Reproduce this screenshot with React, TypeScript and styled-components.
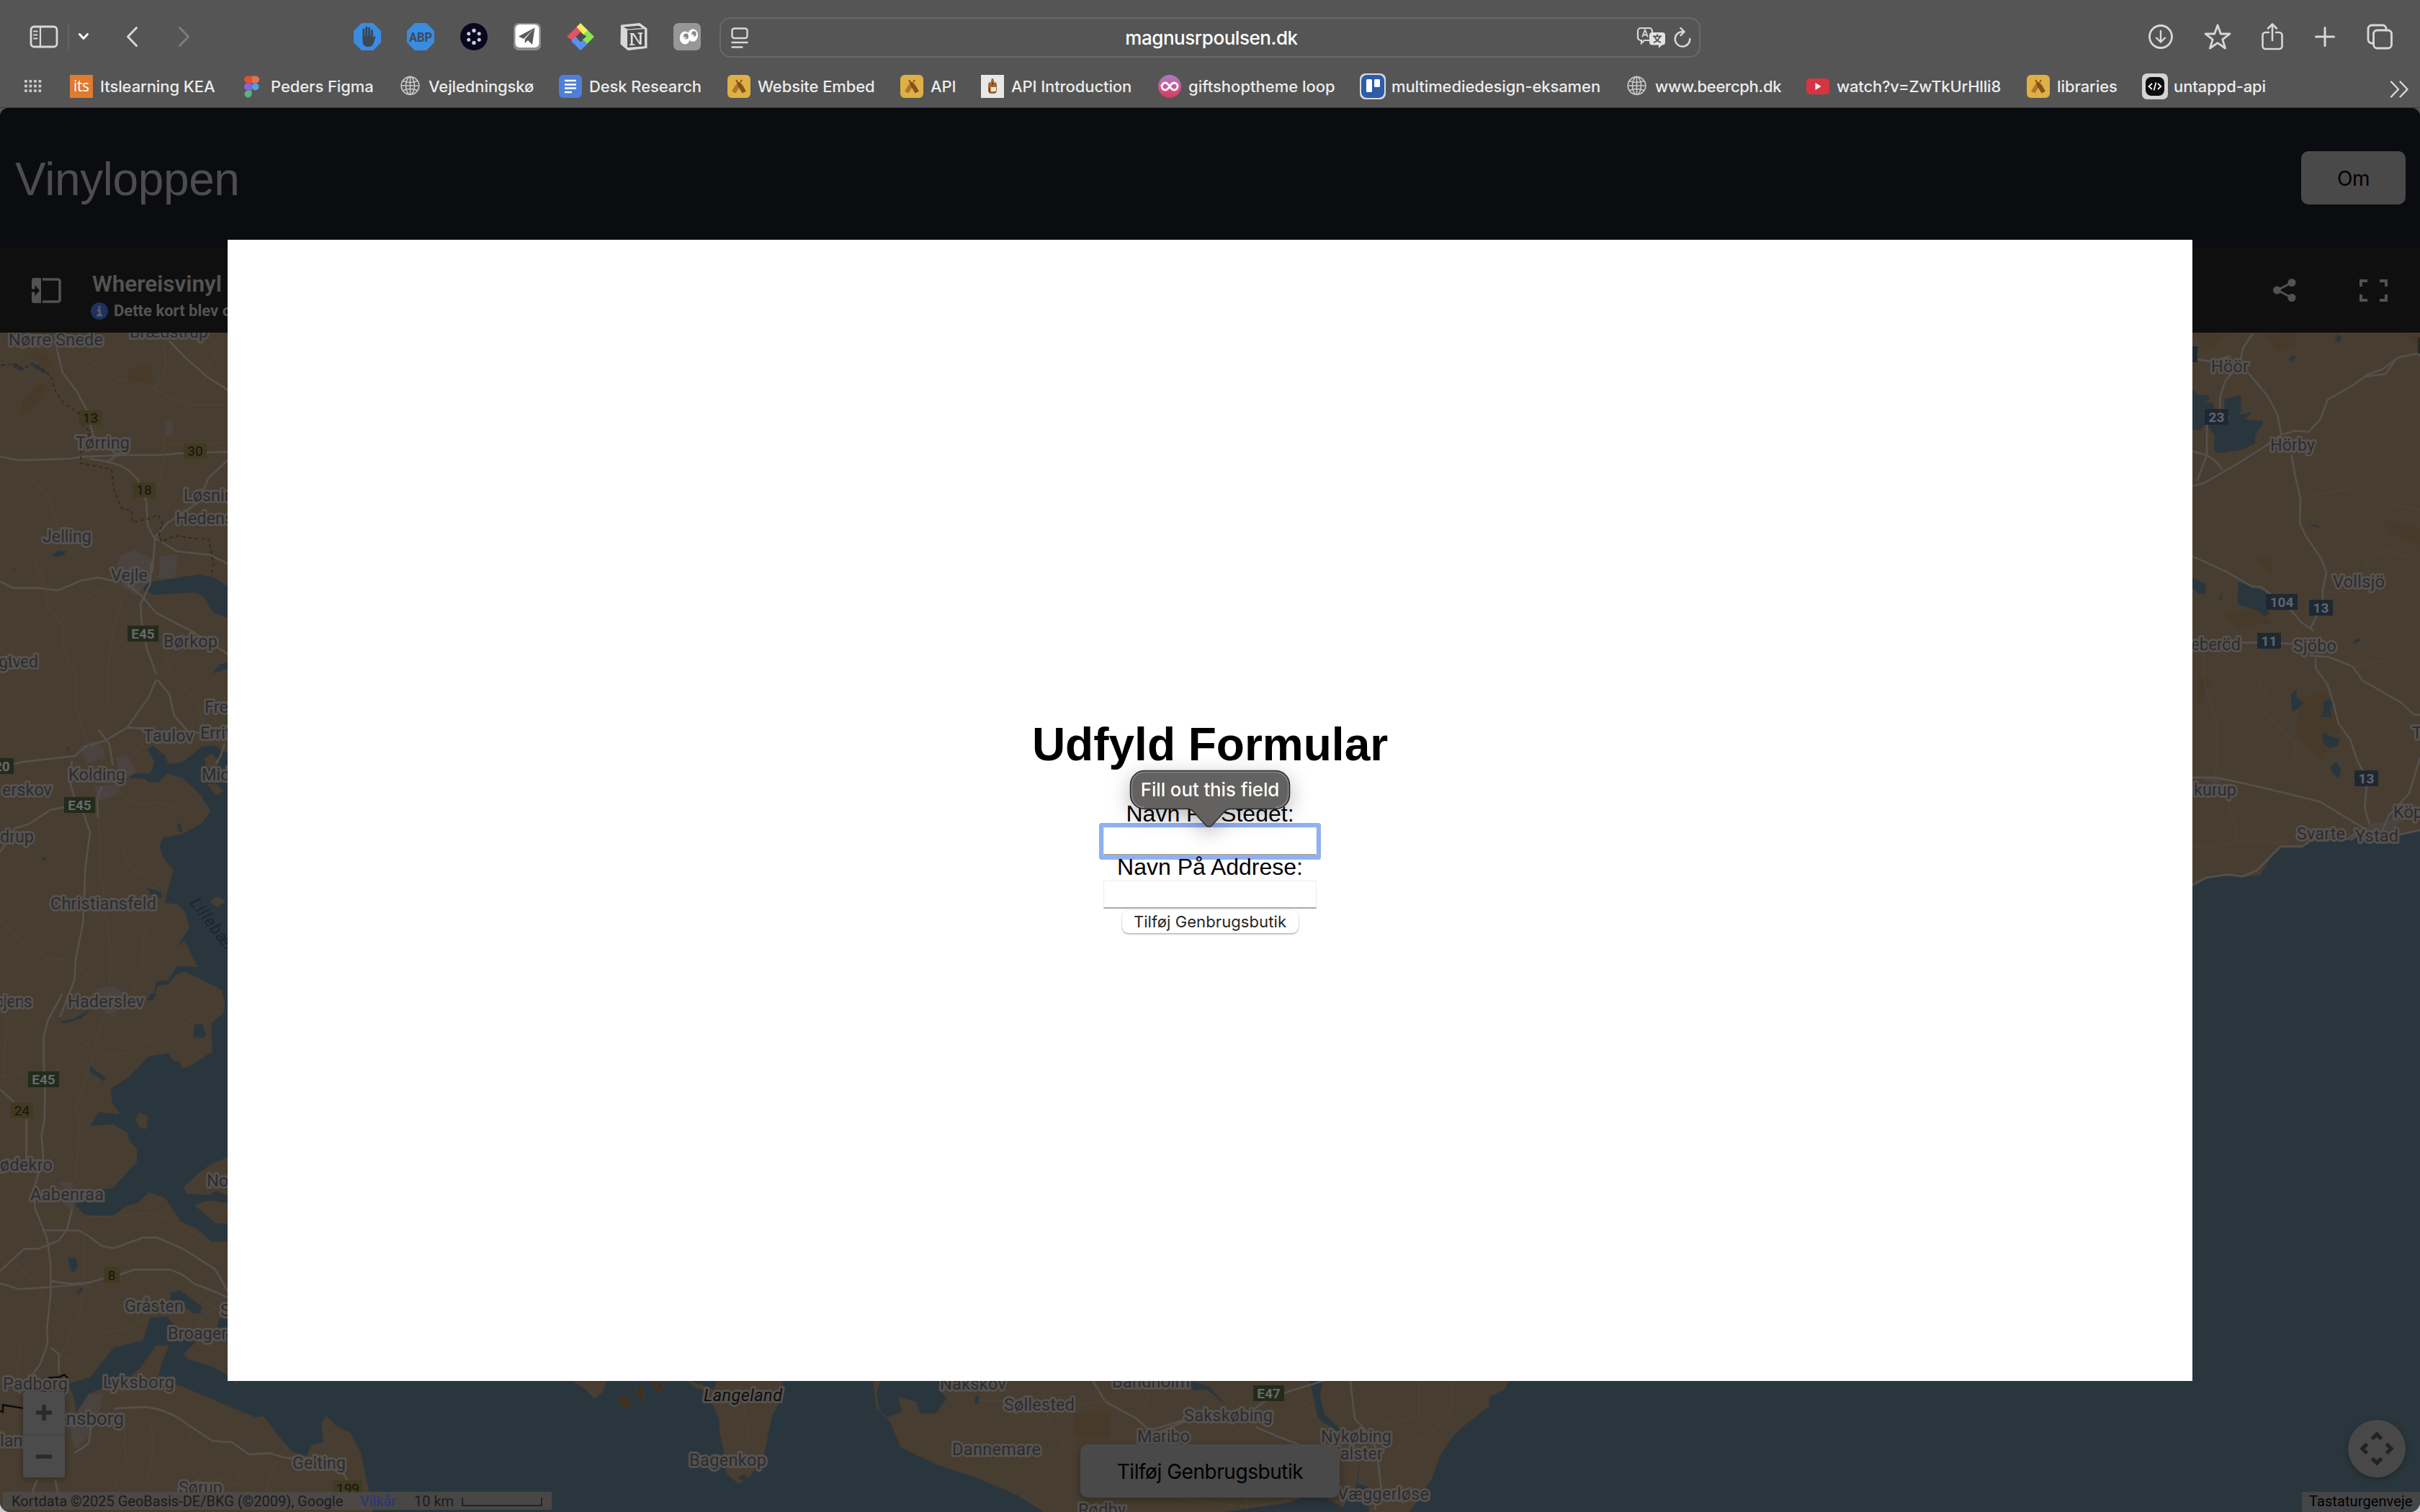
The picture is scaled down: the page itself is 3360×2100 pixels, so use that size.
import React from "react";
import styled, { createGlobalStyle } from "styled-components";

const ui = `Inter, "Liberation Sans", sans-serif`;
const arial = `"Liberation Sans", Arial, sans-serif`;
const roboto = `Roboto, "Liberation Sans", sans-serif`;

const Global = createGlobalStyle`
  * { box-sizing: border-box; }
  body { margin: 0; background: #c9ccd0; overflow: hidden; }
`;

/* ---------- window ---------- */
const Window = styled.div`
  width: 3360px;
  height: 2100px;
  display: flex;
  flex-direction: column;
  overflow: hidden;
  background: #555555;
  border-radius: 0 0 14px 14px;
`;
const Chrome = styled.header`
  flex: 0 0 150px;
  display: flex;
  flex-direction: column;
  background: #555555;
  border-bottom: 1px solid #3a3a3a;
  color: #ececec;
  font-family: ${ui};
`;
const Toolbar = styled.div`
  height: 80px;
  padding-top: 24px;
  display: flex;
`;
const Slot = styled.div<{ $w: number; $gap: number }>`
  flex: 0 0 ${(p) => p.$w}px;
  height: 54px;
  margin-left: ${(p) => p.$gap}px;
  display: flex;
  align-items: center;
  justify-content: center;
  svg { display: block; overflow: visible; }
`;
const Divider = styled.div`
  width: 2px;
  height: 36px;
  background: #636363;
`;
const AddressBar = styled.div`
  flex: 0 0 1362px;
  height: 56px;
  margin-left: 26px;
  padding: 0 11px 0 14px;
  display: flex;
  align-items: center;
  border: 2px solid #696969;
  border-radius: 15px;
  svg { display: block; overflow: visible; }
`;
const Address = styled.div`
  flex: 1;
  padding-left: 52px;
  text-align: center;
  font-size: 26px;
  font-weight: 500;
  letter-spacing: -0.45px;
  color: #fff;
`;
const AddressTools = styled.div`
  display: flex;
  align-items: center;
  gap: 12px;
`;
const Bookmarks = styled.nav`
  height: 69px;
  padding-top: 10px;
  padding-left: 34px;
  display: flex;
  align-items: center;
`;
const GridSlot = styled.div`
  width: 63px;
  svg { display: block; }
`;
const Bookmark = styled.div<{ $w: number }>`
  flex: 0 0 ${(p) => p.$w}px;
  display: flex;
  align-items: center;
  gap: 10px;
  white-space: nowrap;
  svg { display: block; flex: 0 0 32px; overflow: visible; }
`;
const BookmarkLabel = styled.span<{ $ls: number }>`
  font-size: 22px;
  line-height: 32px;
  font-weight: 500;
  letter-spacing: ${(p) => p.$ls}px;
`;
const More = styled.div`
  margin-left: auto;
  padding: 8px 15px 0 0;
  svg { display: block; }
`;

/* ---------- page ---------- */
const Page = styled.div`
  position: relative;
  flex: 1;
  display: flex;
  flex-direction: column;
  overflow: hidden;
  border-radius: 12px 12px 14px 14px;
  background: #0a0c10;
`;
const SiteHeader = styled.div`
  flex: 0 0 194px;
  padding: 0 20px;
  display: flex;
  align-items: center;
  justify-content: space-between;
  background: #0a0c10;
`;
const SiteTitle = styled.h1`
  margin: 0;
  padding: 3px 0 0 1px;
  font: 400 64px/74px ${arial};
  letter-spacing: -0.4px;
  color: #4d4d4f;
`;
const Button = styled.button<{ $w: number }>`
  width: ${(p) => p.$w}px;
  height: 74px;
  padding: 2px 0 0;
  border: 0;
  border-radius: 10px;
  background: #494949;
  color: #000;
  font: 400 28px/34px ${ui};
  letter-spacing: -0.45px;
`;
const MapBar = styled.div`
  flex: 0 0 118px;
  padding: 0 45px 0 44px;
  display: flex;
  align-items: center;
  background: #0f0f0f;
  color: #545454;
  font-family: ${roboto};
  svg { display: block; }
`;
const MapTitle = styled.div`
  margin-left: 41px;
  padding-top: 15px;
  flex: 1;
  display: flex;
  flex-direction: column;
  gap: 6px;
`;
const MapName = styled.div`
  padding-left: 2px;
  font-size: 31.5px;
  line-height: 36px;
  font-weight: 600;
`;
const MapNote = styled.div`
  display: flex;
  align-items: center;
  gap: 8px;
  font-size: 22px;
  line-height: 26px;
  font-weight: 700;
`;
const BarIcons = styled.div`
  display: flex;
  align-items: center;
  gap: 88px;
`;
const MapArea = styled.div`
  position: relative;
  flex: 1;
  background: #2a363d;
`;
const MapSvg = styled.svg`
  display: block;
  width: 3360px;
  height: 1638px;
`;
const Land = styled.path`fill: #473d30;`;
const Water = styled.path`fill: #2a363d;`;
const Urban = styled.path`fill: #4a4340;`;
const Hill = styled.path`fill: #483a2a;`;
const Road = styled.path<{ $minor?: boolean }>`
  fill: none;
  stroke: ${(p) => (p.$minor ? "#4e4337" : "#55504b")};
  stroke-width: ${(p) => (p.$minor ? 1.4 : 2.8)};
  vector-effect: non-scaling-stroke;
  stroke-linejoin: round;
`;
const Border = styled.path`
  fill: none;
  stroke: #2e2923;
  stroke-width: 1.6;
  stroke-dasharray: 5 4;
  vector-effect: non-scaling-stroke;
`;
const Frontier = styled.path`
  fill: none;
  stroke: #0c0b0a;
  stroke-width: 2.4;
  vector-effect: non-scaling-stroke;
`;
const Place = styled.text<{ $big?: boolean }>`
  font: 400 ${(p) => (p.$big ? 26 : 23.5)}px ${roboto};
  fill: #2c2c2f;
  stroke: #55514e;
  stroke-width: 6px;
  stroke-linejoin: round;
  paint-order: stroke;
`;
const Island = styled(Place)`
  font-style: italic;
  fill: #0e0e0f;
`;
const Strait = styled.text`
  font: italic 400 23px ${roboto};
  letter-spacing: 1px;
  fill: #18262d;
`;
const Region = styled.text`
  font: 700 24px ${roboto};
  fill: #4f2d0d;
`;
const ShieldText = styled.text<{ $fill: string; $bold?: boolean }>`
  font: ${(p) => (p.$bold ? 700 : 400)} 19px ${roboto};
  fill: ${(p) => p.$fill};
`;

/* ---------- map controls ---------- */
const ZoomControl = styled.div`
  position: absolute;
  left: 32px;
  top: 1471px;
  width: 58px;
  height: 119px;
  display: flex;
  flex-direction: column;
  border-radius: 4px;
  background: #4b4b4b;
  box-shadow: 0 2px 8px rgba(0, 0, 0, 0.3);
`;
const ZoomButton = styled.div`
  flex: 1;
  display: flex;
  align-items: center;
  justify-content: center;
  & + & { border-top: 2px solid #444; }
`;
const PanControl = styled.div`
  position: absolute;
  right: 20px;
  top: 1510px;
  width: 80px;
  height: 80px;
  border-radius: 50%;
  background: #484848;
  box-shadow: 0 2px 8px rgba(0, 0, 0, 0.3);
`;
const AddButton = styled(Button)`
  position: absolute;
  left: 1500px;
  top: 1544px;
  box-shadow: 0 4px 12px rgba(0, 0, 0, 0.3);
`;
const Attribution = styled.div`
  position: absolute;
  left: 4px;
  bottom: 3px;
  width: 762px;
  height: 25px;
  padding: 2px 0 0 12px;
  display: flex;
  align-items: center;
  background: rgba(76, 74, 72, 0.88);
  color: #1c1c1c;
  font: 400 20px/25px ${roboto};
  white-space: nowrap;
`;
const Credit = styled.span`
  width: 484px;
`;
const Terms = styled.span`
  width: 75px;
  color: #25367c;
`;
const ScaleLabel = styled.span`width: 66px;`;
const ScaleBar = styled.span`
  width: 112px;
  height: 12px;
  border: 2px solid #222;
  border-top: 0;
`;
const Shortcuts = styled.div`
  position: absolute;
  right: 0;
  bottom: 0;
  width: 164px;
  height: 28px;
  padding-left: 10px;
  background: #434547;
  color: #000;
  font: 400 20px/27px ${roboto};
  letter-spacing: 0.1px;
`;

/* ---------- dialog ---------- */
const Overlay = styled.div`
  position: absolute;
  inset: 0;
  display: flex;
  align-items: center;
  justify-content: center;
`;
const Dialog = styled.form`
  width: 2728px;
  height: 1585px;
  display: flex;
  flex-direction: column;
  align-items: center;
  justify-content: center;
  background: #fff;
  color: #000;
`;
const DialogTitle = styled.h2`
  margin: 43px 0;
  font: 700 64px/74px ${arial};
`;
const FieldLabel = styled.label`
  position: relative;
  z-index: 1;
  height: 35px;
  font: 400 32px/32px ${arial};
`;
const Field = styled.div<{ $focused?: boolean }>`
  position: relative;
  z-index: ${(p) => (p.$focused ? 1 : 0)};
  width: 296px;
  height: 39px;
  background: #fff;
  border: 1px solid #ededed;
  border-bottom: 2px solid #a9a9a9;
  box-shadow: ${(p) => (p.$focused ? "0 0 0 6px #8fb1f3" : "none")};
  border-radius: ${(p) => (p.$focused ? 1 : 0)}px;
`;
const Submit = styled.button`
  width: 245px;
  height: 32px;
  margin-top: 2px;
  padding: 0 0 1px;
  border: 0;
  border-radius: 9px;
  background: #fff;
  box-shadow: 0 0 0 1px rgba(0, 0, 0, 0.08), 0 2px 2px rgba(0, 0, 0, 0.22);
  color: #262626;
  font: 400 22px/30px ${ui};
  letter-spacing: 0.1px;
`;
const Tooltip = styled.div`
  position: absolute;
  z-index: 2;
  left: 36px;
  top: -80px;
  width: 222px;
  height: 80px;
  filter: drop-shadow(0 8px 14px rgba(0, 0, 0, 0.28));
  svg { display: block; overflow: visible; }
`;
const TooltipText = styled.div`
  position: absolute;
  inset: 0 0 26px 0;
  font: 500 26px/54px ${ui};
  letter-spacing: -0.15px;
  text-align: center;
  color: #fff;
  white-space: nowrap;
`;

/* ---------- data ---------- */
type Mark = { label: string; w: number; icon: string; ls?: number };
const bookmarks: Mark[] = [
  { label: "Itslearning KEA", w: 237, icon: "its" },
  { label: "Peders Figma", w: 219, icon: "figma" },
  { label: "Vejledningskø", w: 223, icon: "globe" },
  { label: "Desk Research", w: 234, icon: "docs" },
  { label: "Website Embed", w: 240, icon: "beer" },
  { label: "API", w: 112, icon: "beer" },
  { label: "API Introduction", w: 246, icon: "print" },
  { label: "giftshoptheme loop", w: 282, icon: "loop", ls: 0 },
  { label: "multimediedesign-eksamen", w: 366, icon: "trello" },
  { label: "www.beercph.dk", w: 252, icon: "globe", ls: -0.3 },
  { label: "watch?v=ZwTkUrHlli8", w: 306, icon: "tube", ls: -0.2 },
  { label: "libraries", w: 162, icon: "beer" },
  { label: "untappd-api", w: 180, icon: "code" },
];

type Label = [string, number, number, number?];
const places: Label[] = [
  ["Nørre Snede", 12, 480, 131], ["Brædstrup", 180, 469, 109], ["Tørring", 105, 623, 75],
  ["Løsning", 255, 696], ["Hedensted", 244, 728], ["Jelling", 59, 753, 68],
  ["Vejle", 154, 807, 51], ["Børkop", 227, 899, 75], ["gtved", -2, 927, 55],
  ["Fredericia", 284, 990], ["Taulov", 199, 1030, 70], ["Erritsø", 278, 1026],
  ["Middelfart", 280, 1084], ["Kolding", 95, 1084, 79], ["erskov", 3, 1105, 69],
  ["drup", 0, 1170, 47], ["Christiansfeld", 70, 1263, 147], ["ojens", -8, 1399, 53],
  ["Haderslev", 94, 1399, 106], ["ødekro", 0, 1626, 73], ["Aabenraa", 42, 1667, 102],
  ["Nordborg", 287, 1648], ["Gråsten", 173, 1822, 82], ["Sønderborg", 306, 1828],
  ["Broager", 233, 1860], ["Padborg", 4, 1930, 90], ["Lyksborg", 143, 1928, 99],
  ["lanved", 0, 2009], ["Sørup", 248, 2074, 61], ["Gelting", 406, 2040, 74],
  ["Bagenkop", 957, 2036, 107], ["Nakskov", 1305, 1930, 92], ["Bandholm", 1544, 1927, 108],
  ["Søllested", 1394, 1959, 98], ["Sakskøbing", 1644, 1974, 123], ["Maribo", 1579, 2003, 73],
  ["Nykøbing", 1834, 2003, 98], ["Falster", 1848, 2027, 72], ["Dannemare", 1322, 2021, 123],
  ["Væggerløse", 1857, 2083, 127], ["Rødby", 1497, 2105, 66], ["Höör", 3070, 517, 52],
  ["Hörby", 3152, 626, 62], ["Vollsjö", 3239, 816, 72], ["Sjöbo", 3184, 905, 60],
  ["eberöd", 3042, 903, 69], ["kurup", 3046, 1105, 59], ["Svarte", 3189, 1166, 67],
  ["Ystad", 3270, 1169, 60], ["Köpingebro", 3323, 1136], ["Tomelilla", 3349, 1026],
];

type Shield = [string, number, number, number, number, "y" | "g" | "b"];
const shields: Shield[] = [
  ["13", 110, 570, 31, 20, "y"], ["30", 255, 616, 32, 21, "y"], ["18", 184, 670, 32, 21, "y"],
  ["24", 15, 1531, 31, 22, "y"], ["8", 144, 1760, 22, 22, "y"], ["199", 463, 2056, 40, 22, "y"],
  ["E45", 177, 869, 43, 22, "g"], ["E20", -24, 1053, 43, 22, "g"], ["E45", 89, 1107, 43, 22, "g"],
  ["E45", 39, 1488, 43, 22, "g"], ["E47", 1740, 1924, 43, 22, "g"], ["", 3357, 469, 20, 22, "g"],
  ["", 3030, 481, 21, 22, "b"], ["23", 3061, 568, 33, 22, "b"], ["104", 3146, 825, 44, 22, "b"],
  ["13", 3206, 833, 33, 22, "b"], ["11", 3134, 879, 33, 22, "b"], ["13", 3269, 1070, 33, 22, "b"],
];
const shieldColors = {
  y: ["#403a20", "#151412"],
  g: ["#222b1c", "#69696a"],
  b: ["#1e2833", "#5f666e"],
};

/* ---------- bookmark icons ---------- */
function BookmarkIcon({ kind }: { kind: string }) {
  const s = { width: 32, height: 32, viewBox: "0 0 32 32" };
  switch (kind) {
    case "its":
      return (
        <svg {...s}><rect width="32" height="32" fill="#e07b2f" />
          <text x="16" y="23" textAnchor="middle" fontFamily="Open Sans" fontSize="21" fill="#fff" textLength="22">its</text></svg>
      );
    case "figma":
      return (
        <svg {...s}><g transform="translate(5 1.5)">
          <path d="M5 0h5.500v10H5A5 5 0 0 1 5 0z" fill="#d9532c" /><path d="M10.500 0H16a5 5 0 0 1 0 10h-5.500z" fill="#e0705c" />
          <path d="M5 10h5.500v10H5a5 5 0 0 1 0-10z" fill="#8f5fe0" /><circle cx="15.500" cy="15" r="5" fill="#4da3e0" />
          <path d="M5 20h5.500v5A5 5 0 1 1 5 20z" fill="#52b77c" /></g></svg>
      );
    case "globe":
      return (
        <svg {...s}><g fill="none" stroke="#c8c8c8" strokeWidth="1.7"><circle cx="16.500" cy="15" r="12.300" />
          <ellipse cx="16.500" cy="15" rx="6" ry="12.300" /><path d="M16.500 2.700v24.600M4.200 15h24.600M6.500 8.500q10 4 20 0M6.500 21.500q10-4 20 0" /></g></svg>
      );
    case "docs":
      return (
        <svg {...s}><rect width="32" height="32" rx="6" fill="#4f7fd9" />
          <path d="M8 8h16M8 13.500h16M8 18.500h16M8 24h10" stroke="#fff" strokeWidth="2.600" /></svg>
      );
    case "beer":
      return (
        <svg {...s}><rect width="32" height="32" rx="6" fill="#deb045" />
          <path d="M18.500 8.500l1.200.6-2.700 7.200L11.300 25.500 6 22.800l5.600-9.200z" fill="#b5732a" />
          <path d="M12.300 9.100l1.200-.6 7 5.100 5.500 9.200-5.300 2.700-5.700-9.200z" fill="#7d4a1c" opacity=".92" />
          <path d="M13.200 9l-1-2M18.800 9l1-2" stroke="#7d4a1c" strokeWidth="1.800" /></svg>
      );
    case "print":
      return (
        <svg {...s}><rect width="32" height="32" fill="#e8e8e6" />
          <path d="M10 13l2-4 1 3 2-7h2l2 7 1-3 2 4v10l-3 3h-6l-3-3z" fill="#a8642e" /><path d="M12 18v7M20 18v7M16 10v4" stroke="#5b3213" strokeWidth="1.400" /><rect x="13.500" y="17" width="7.500" height="6" fill="#efe6da" /></svg>
      );
    case "loop":
      return (
        <svg {...s}><defs><linearGradient id="lg" x1="0" y1="0" x2="0" y2="1"><stop offset="0" stopColor="#a37cc4" /><stop offset=".55" stopColor="#cf5590" /><stop offset="1" stopColor="#d63b52" /></linearGradient></defs>
          <circle cx="16" cy="16" r="16" fill="url(#lg)" />
          <path d="M16 16c-3-4.500-4-5-6-5a5 5 0 0 0 0 10c2 0 3-.5 6-5s4-5 6-5a5 5 0 0 1 0 10c-2 0-3-.5-6-5z" fill="none" stroke="#fff" strokeWidth="2.800" /></svg>
      );
    case "trello":
      return (
        <svg {...s}><rect x="-2" y="-2" width="36" height="36" rx="8" fill="#d9dcdc" /><rect width="32" height="32" rx="8" fill="#2c5caa" />
          <rect x="7" y="6" width="8" height="18" rx="1.500" fill="#fff" /><rect x="18" y="6" width="8" height="11" rx="1.500" fill="#fff" /></svg>
      );
    case "tube":
      return (
        <svg {...s}><rect y="5" width="32" height="22" rx="5" fill="#d8343f" /><path d="M12.500 11v10l8-5z" fill="#fff" /></svg>
      );
    default:
      return (
        <svg {...s}><rect x="-2" y="-2" width="36" height="36" rx="7" fill="#d4d4d4" /><rect x="3" y="3" width="26" height="26" rx="8" fill="#0d0d0d" />
          <path d="M12 12l-4.500 4 4.500 4M20 12l4.500 4-4.500 4M17.500 10.500l-3 11" fill="none" stroke="#fff" strokeWidth="1.700" /></svg>
      );
  }
}

const line = { fill: "none", stroke: "#d8d8d8", strokeWidth: 2.8, strokeLinecap: "round" as const, strokeLinejoin: "round" as const };

function BrowserChrome() {
  return (
    <Chrome>
      <Toolbar>
        <Slot $w={40} $gap={41}>
          <svg width="40" height="32" viewBox="0 0 40 32" {...line}><rect x="2" y="2" width="36" height="28" rx="4.500" /><path d="M15 2v28M6 8.500h4.500M6 13.500h4.500M6 18.500h4.500" strokeWidth="2.200" /></svg>
        </Slot>
        <Slot $w={2} $gap={13}><Divider /></Slot>
        <Slot $w={16} $gap={12}>
          <svg width="16" height="10" viewBox="0 0 16 10" {...line} stroke="#fff" strokeWidth="3"><path d="M2.500 1.500L8 7.500l5.500-6" /></svg>
        </Slot>
        <Slot $w={17} $gap={51}>
          <svg width="17" height="30" viewBox="0 0 17 30" {...line} strokeWidth="3"><path d="M14.500 2.500L2.500 15l12 12.500" /></svg>
        </Slot>
        <Slot $w={17} $gap={55}>
          <svg width="17" height="30" viewBox="0 0 17 30" {...line} stroke="#7d7d7d" strokeWidth="3"><path d="M2.500 2.500L14.500 15l-12 12.500" /></svg>
        </Slot>
        <Slot $w={38} $gap={227}>
          <svg width="38" height="38" viewBox="0 0 38 38"><path d="M11 0h16l11 11v16L27 38H11L0 27V11z" fill="#3a8ce0" />
            <path d="M14 9v12M17.800 6v14M21.600 7v13M25.400 10.500v11" stroke="#3b4855" strokeWidth="3" strokeLinecap="round" /><path d="M12.500 18h14.400v3l2-3 1.600 1-3 9.500q-2 4.500-7 4.500-8 0-8-8z" fill="#3b4855" /></svg>
        </Slot>
        <Slot $w={38} $gap={36}>
          <svg width="38" height="38" viewBox="0 0 38 38"><path d="M11 0h16l11 11v16L27 38H11L0 27V11z" fill="#3a8ce0" />
            <text x="19" y="25.500" textAnchor="middle" fontFamily="Roboto" fontWeight="700" fontSize="18" textLength="32" lengthAdjust="spacingAndGlyphs" fill="#3c4a5a">ABP</text></svg>
        </Slot>
        <Slot $w={38} $gap={36}>
          <svg width="38" height="38" viewBox="0 0 38 38"><circle cx="19" cy="19" r="19" fill="#08071f" />
            <g fill="#cfcfcf"><circle cx="19" cy="10.500" r="2.700" /><circle cx="19" cy="27.500" r="2.700" /><circle cx="11.800" cy="14.700" r="2.500" /><circle cx="26.200" cy="14.700" r="2.500" /><circle cx="11.800" cy="23.300" r="2.500" /><circle cx="26.200" cy="23.300" r="2.500" /></g></svg>
        </Slot>
        <Slot $w={38} $gap={36}>
          <svg width="38" height="38" viewBox="0 0 38 38"><rect width="38" height="38" rx="7" fill="#8b8b8b" /><rect x="2.500" y="2" width="33" height="32" rx="6" fill="#fff" />
            <path d="M29.500 6.500L7 18.500l7 3.500zM29.500 6.500L26 30l-6-6-4.500 4 .5-6z" fill="#595959" /></svg>
        </Slot>
        <Slot $w={38} $gap={36}>
          <svg width="38" height="38" viewBox="0 0 38 38"><path d="M14.500 4.500L23.500 13.500 11 26 0 19z" fill="#ea4f63" /><path d="M19 0l10.500 10.500-6 6L13.500 5.500z" fill="#f7ee5c" />
            <path d="M29 10l9 9-10.500 10.500-6-6 6-5-4.500-3z" fill="#86e64f" /><path d="M19 38L6 25l5.500-6 8 7.500 3.500-3 5.500 5.500z" fill="#5a8ff5" /><path d="M19 12.500l6.500 6.500-6.500 6.500-6.500-6.500z" fill="#4c4c4c" /></svg>
        </Slot>
        <Slot $w={38} $gap={36}>
          <svg width="38" height="38" viewBox="0 0 38 38"><path d="M2 3.500L27 1l9.500 7v26L11 37 1.500 29z" fill="#d8d8d8" stroke="#d8d8d8" strokeWidth="2" strokeLinejoin="round" />
            <path d="M10 9.800l24-1.600v24L10 34z" fill="#4d4d4d" /><path d="M4.500 5.500L26 3.800l5 3.200-20.500 1.600z" fill="#4d4d4d" />
            <path d="M13 14h6l8 12.500V15.200l-2.500-.5v-1.500h7v1.500l-1.800.5V30H27L17.500 16v13l3 .5v1.500H13v-1.500l1.800-.5V16z" fill="#dedede" /></svg>
        </Slot>
        <Slot $w={38} $gap={36}>
          <svg width="38" height="38" viewBox="0 0 38 38"><rect width="38" height="38" rx="7" fill="#979797" />
            <ellipse cx="16" cy="20.500" rx="7.300" ry="9" fill="#fff" /><ellipse cx="27" cy="17" rx="7" ry="8.700" fill="#fff" /><ellipse cx="17.500" cy="18.500" rx="3.400" ry="4" fill="#868686" /><ellipse cx="28.500" cy="15" rx="3.200" ry="3.800" fill="#868686" /><circle cx="16.300" cy="20.500" r="1.300" fill="#fff" /><circle cx="27.200" cy="17" r="1.300" fill="#fff" /></svg>
        </Slot>
        <AddressBar>
          <svg width="24" height="29" viewBox="0 0 24 29" {...line} strokeWidth="2.400"><rect x="1.500" y="1.500" width="21" height="13.500" rx="3" /><path d="M1.500 21h21M1.500 27.500h14" /></svg>
          <Address>magnusrpoulsen.dk</Address>
          <AddressTools>
            <svg width="39" height="29" viewBox="0 0 39 29"><path d="M18 18H10l-4 4v-4H5a4 4 0 0 1-4-4V5a4 4 0 0 1 4-4h12a4 4 0 0 1 4 4v3" fill="none" stroke="#d8d8d8" strokeWidth="2.200" />
              <path d="M7 13.500l4-10 4 10M8.300 10.500h5.400" fill="none" stroke="#d8d8d8" strokeWidth="1.800" />
              <rect x="17" y="7" width="22" height="17.500" rx="4" fill="#e2e2e2" /><path d="M30 24v5l6-6z" fill="#e2e2e2" />
              <path d="M28 9.500v3M22 12.500h12M24.500 13q2 6 8.500 8M31.500 13q-2 6-8.500 8" fill="none" stroke="#555" strokeWidth="1.900" /></svg>
            <svg width="24" height="28" viewBox="0 0 24 28" {...line} strokeWidth="2.500"><path d="M13 6A10.300 10.300 0 1 0 22.300 16M9.500 1l5 5.200-5 5" /></svg>
          </AddressTools>
        </AddressBar>
        <Slot $w={34} $gap={622}>
          <svg width="34" height="34" viewBox="0 0 34 34" {...line}><circle cx="17" cy="17" r="15.500" /><path d="M17 9v15.500M11 18.500l6 6 6-6" strokeWidth="2.400" /></svg>
        </Slot>
        <Slot $w={38} $gap={43}>
          <svg width="38" height="36" viewBox="0 0 38 36" {...line}><path d="M19 2l4.300 12H36l-10.200 7.800L29.600 34 19 26.600 8.400 34l3.800-12.200L2 14h12.700z" /></svg>
        </Slot>
        <Slot $w={30} $gap={42}>
          <svg width="30" height="38" viewBox="0 0 30 38" {...line}><path d="M10 13H5.500a4 4 0 0 0-4 4v15a4 4 0 0 0 4 4h19a4 4 0 0 0 4-4V17a4 4 0 0 0-4-4H20M15 24V2M9 7.500L15 1.500l6 6" strokeWidth="2.600" /></svg>
        </Slot>
        <Slot $w={28} $gap={44}>
          <svg width="28" height="28" viewBox="0 0 28 28" {...line} strokeWidth="3"><path d="M14 1.500v25M1.500 14h25" /></svg>
        </Slot>
        <Slot $w={36} $gap={44}>
          <svg width="36" height="36" viewBox="0 0 36 36" {...line}><path d="M9.500 27H7a5 5 0 0 1-5-5V7a5 5 0 0 1 5-5h15a5 5 0 0 1 5 5v2" /><rect x="9.500" y="9" width="25" height="25" rx="5" /></svg>
        </Slot>
      </Toolbar>
      <Bookmarks>
        <GridSlot>
          <svg width="24" height="18" viewBox="0 0 24 18" fill="#c9c9c9">
            {[0, 6.6, 13.2].map((y) => [0, 6.5, 13, 19.5].map((x) => <rect key={`${x}-${y}`} x={x} y={y} width="3.800" height="3.800" rx=".8" />))}
          </svg>
        </GridSlot>
        {bookmarks.map((b) => (
          <Bookmark key={b.label} $w={b.w}>
            <BookmarkIcon kind={b.icon} />
            <BookmarkLabel $ls={b.ls ?? -0.1}>{b.label}</BookmarkLabel>
          </Bookmark>
        ))}
        <More>
          <svg width="27" height="24" viewBox="0 0 27 24" {...line} strokeWidth="2.400"><path d="M2 1.500L12 12 2 22.500M14.500 1.500L24.500 12l-10 10.500" /></svg>
        </More>
      </Bookmarks>
    </Chrome>
  );
}

function Terrain() {
  return (
    <>
      <Land d="M0 462H330V2100H0zM3030 462H3360V1300H3030z" />
      {/* Tørring – Jelling */}
      <g transform="translate(0 150) scale(.33333 .4146)">
        <Hill d="M530 880q50-20 105-10v50q-60 20-100 0zM90 990q60-80 110-60-40 90-110 95zM120 820q60-10 100 30l-30 30z" />
        <Water d="M50 855l30 8 25 12-20 5-30-10zM130 855l30 8 45 27-25-3-40-18zM215 1497l30-15 32 2-15 15-28 6zM55 1545l12-10v8l-12 12z" />
        <Urban d="M500 1500l60-20 75 30v70H480zM665 1500l75-5-10 80h-70zM690 1050h30v50h-35z" />
        <Road d="M235 800l25 85 60 65 40 60 30 90q60 40 110 65M0 1168l80 12 210-5 55-7 150-5 170 0 110-8 175-3M440 1185q100 10 145 75l25 60 5 80 30 45-10 110M500 1155l-50 30-75-10M950 945l-80-40-100-70-65-55M948 1180l-80 60-40 80-130 70-55 48M645 1440l90 45 140 12 75 30" />
        <Road $minor d="M270 790l110 60 110 60 130 20 110 50 80 15H950M685 790l5 80-50 80-80 80-70 20-60 40M900 810l-60 120-60 70-70 30-30 80v80l-20 80M60 1195l70 40 80 80 20 60 30 80M0 1395l80 60 60 50 40 80M400 1430l60 40 50 80M680 1120l130 10 140-10" />
        <Border d="M5 862l60-5 30 18 40-20 60 30 25 25 5 30 40 50 60 30 20 40 30 25-10 25-25 20-5 60 70 10 60 10 10 70 30 60 45 10 0 38 60-10 50-15 20 35-20 20 10 35 60-20 90 10 50 0 20 90-25 70" />
      </g>
      {/* Vejle – Haderslev */}
      <g transform="translate(0 780) scale(.33333 .3954)">
        <Water d="M590 85L640 70 830 45 900 60 990 110V210L890 180 850 125 810 108 640 117 600 100zM887 392l25-30 36-8v22l-40 12zM525 745l100 0 20-40-30-45 20-13 55 35 10 30 60-7 80-55 50-5 60 30 40-10V925H940l-60-50-30-45-90-70-65-15-35 30-40 0-15-13-82-2zM278 655l10-3-3 20zM610 1145l60 15 5 25-45-15zM737 920l15 0 8 30-15 0zM175 1040l20 0-5 8-15-2z" />
        <Water d="M948 830V1568H940L925 1505 820 1460 770 1440 735 1450 700 1485 655 1490 640 1540H610L640 1520 650 1475 700 1470 740 1420 825 1425 770 1330 738 1352 790 1285 770 1230 740 1205 685 1197 723 1082 680 1040 665 1000 680 970 760 957 840 920 878 875 840 830z" />
        <Land d="M875 1195l30-20 35 18-35 22zM850 690l35-15 30 30-20 25-35-5zM860 780l40 0 30 25-30 15z" />
        <Urban d="M490 0H630v60l-60 60-60-30zM665 0h70v30l-70 20zM330 650l60-20 40 20 10 40-80 20zM480 690l50-10 40 60-60 30zM390 790l120-10-20 40-80 20zM400 1500l80-10 60 40-120 10z" />
        <Road d="M0 70l55 23h110l75 8 100-35 70-10 80 15M530 80l60 40 60 60 150 65 150 80M630 0l-5 80-40 70 5 60 20 90 40 95M655 415l50 50 20 75 60 60 160 5M650 415l-30 60-90 108 90 5M530 583l-90 45-80 20-50 35-210 20-100 18M410 590l45 50 15 75M300 700l-10 70 20 60 40 60 25 60-20 130-5 120-5 70-30 130-5 70-60 130M270 862l-60 10-90 50-60 15-60 85M425 790l-20 40 3 70M935 640l-15 40-20 30" />
        <Road $minor d="M520 90l-40 120-25 120-5 100 5 90M470 85l-90 30-120 85-100 100M175 0l5 60 20 100 60 60 5 80 50 100 0 90 25 90 40 90M690 330l20 50 60 60 50 60 25 60M410 900l10 190 30 200 10 80-5 120M420 935l80 60 50 90 60 20 90 50M650 1230l-50 80-10 130-40 90M0 1260l70 60 130 75 80 3 60 30 50 60M480 690l60-5 60-40M480 790l60 50 50 15 80-10 60 20" />
      </g>
      {/* Haderslev – Flensborg */}
      <g transform="translate(0 1380) scale(.33333 .4592)">
        <Water d="M948 0V495L880 515 825 545 765 585 775 605 870 610 900 597 948 610V750H880L820 710 755 690 690 620 620 600 570 635 530 640 470 672 355 670 290 625 300 605 470 588 570 510V470L540 445 530 420 470 395 378 400 410 358 500 366 468 330 460 288 500 270 540 250 620 190 700 180 750 228 790 220 885 175 880 90 930 60zM375 220l65 35-5 12-60-30zM250 85l60-10 70-30-40 30-70 15zM610 20l20-20 25 0-25 20zM285 800l30 0 10 25-20 20-15-15zM318 905l20-15 12 2-25 18z" />
        <Water d="M805 130l5-35 30-5 20 35-15 10z" />
        <Water d="M285 1180l90-20 100-90 60-10 60 -10 30-70 70-2 20 15 60 30H950V1160L990 1180V1260L830 1210 730 1180 640 1190 540 1165 500 1180 400 1200 365 1215 320 1275 310 1230zM710 905l40-8 90 50-5 20-30 0-55-30-40-10zM905 1010l10-30 35 5v25z" />
        <Land d="M530 1165l50-30 70-70 55 0-30 50-15 45zM765 1090l70-50 115 0v115l-60-25-110-25zM565 380l15-20 35 10-5 40-30-5zM810 640l60-15 80 10v60h-50z" />
        <Water d="M860 622l40-25 35 18-5 15-30-12-35 10zM728 205l20 0 12 20-15 5z" />
        <Urban d="M370 1210l60 0-10 40-50 90-60 40-20-80zM430 30l60-10-10 50-40-10zM240 570l70 0-20 30zM260 630l60 0-20 30z" />
        <Road d="M260 0l-60 80-18 50v80l6 100-3 70-12 50 8 70-40 90 5 60 50 90 15 80 0 90-15 100 2 50-30 60-50 50-40 40M110 380V510M0 290l60 38M0 840l100-68h60l85-25 35-35 20-60M175 716h150l50 20 50 28 50 6 120-32h60l110 35 130 60 60 75M0 876l80 18 200-10 80-8 100-20M215 870l80 8 90-5M500 850l60-15h150l50 15 50 28 90 25 60 20M210 1070l35 20v60M475 1255l130-5q100 10 160 45l120 58 105 5M380 1310l-10 50-60 30" />
        <Road $minor d="M20 0l5 110-10 140M0 255l80-18 60 4M430 70l-50 130-60 130 10 80-15 160M380 210l60-25 90-5 60-30 120-30 100-50 60-40M370 150l-80 35-70 60M340 680l10 60 0 150-20 80-80 130M360 676l120-3 140-10 90 20 120 50 90 60M215 890l140-8 100 30M500 860l80 50M60 810l110 90 10 20M770 880l80 50 70 30M900 940l-80 60M430 1030l120-25 80-30M250 1100l60 10M520 1310l5 130M625 1290l15 60-20 120M770 1290l30 70M400 1400l70 60 60 100M780 1420l60 60 100-15M70 1160l15-100" />
        <Frontier d="M0 1262l12 4 0-22 85 10M200 1162l48-2 20-7 15 10M187 1190v15" />
        <Road d="M155 1470l-25 45M230 1470l20 70" />
      </g>
      {/* Gelting – Langeland */}
      <g transform="translate(320 1900) scale(.574 .33333)">
        <Land d="M0 165L25 180 60 205 80 200 110 270 150 350 185 365 195 320 225 310 220 230 232 200 255 240 290 270 315 350 325 430 345 600H0zM825 51L912 51 900 100 880 130 860 90zM1105 51L1140 70 1170 90 1175 51 1336 51 1335 120 1310 200 1290 370 1255 455 1230 485 1200 440 1195 360 1183 270 1182 210 1165 150 1140 90 1120 80z" />
        <Water d="M1228 455l12-10 12 5-8 20-12-5z" />
        <Road d="M0 305l45 55 50-5 40 20h80l50 40 20 60" />
        <Road $minor d="M45 365l-30 60 5 60-20-5M110 380l-20 100-5 120M1230 60l15 120 8 80-10 120-30 60" />
      </g>
      {/* Lolland – Falster */}
      <g transform="translate(1180 1900) scale(.6122 .33333)">
        <Land d="M52 51L1495 51 1485 90 1450 120V160L1400 230 1370 280 1340 360 1320 460 1270 600H1125L1115 575 1080 545 1100 480 1000 560 850 600H440L380 530 290 460 200 405 115 330 90 220 60 170z" />
        <Water d="M70 51L225 51 200 90 220 125 195 190H160L150 140 110 120 118 185 85 205 68 180 60 110zM285 115l8 0-2 35-8 0zM765 51l50 25 35 75-40-62-30 5zM1042 51l32 0-8 60 10 80 35 60 20 60 25 90-5 80 30 20-5 110 20 50h-40l-10-35-30-35 10-40 20-40 10-120-45-120-50-60-8-80z" />
        <Hill d="M510 190l80-10v110h-80zM650 450l100 0-40 60z" />
        <Road d="M550 51l30 90 70 70 35 60M680 260l90-50 120-5 50-65 60-45 80-45M770 215l-80 60M920 245l50 40 50 35M1135 51l10 160 30 60 20 70 10 160-15 90" />
        <Road $minor d="M300 135h90M515 150l80-15M440 100l10 120 25 60 10 60M680 110l-15 80M880 250l10 60M1000 110l50 60 15 60M1290 51v150l-90 40M1370 51l-10 150-50 80-70 50M600 600l10-70M750 545l50 10 100 25 100-30M900 540v50" />
      </g>
      {/* Höör – Hörby */}
      <g transform="translate(3030 150) scale(.33333 .3571)">
        <Water d="M42 1095l25 20 45 2v20l-25 8 42 2 5 90-40-5-20 20-32 0z" />
        <Water d="M175 1130l70-12 0 60-10 14 55-8-28 27 48 6 18 0 8-5 0 18-15 15-17 30-2 30-57 25-65 10-40 3-10-20 5-50-30-35 85-15 10-20-20-25-5-20z" />
        <Water d="M445 915l15-10 8 5-15 10zM635 895l15-15 15 15-15 18zM445 975l20-15 8 10-20 18z" />
        <Hill d="M345 880l130-5 0 50-80 20zM30 870l150 10-60 60zM930 880h60v60z" />
        <Road d="M295 875l-40 55-18 65-60 70-20 60V1170M275 1030l80 90 40 70 18 80-75 50-120 70-130 70-48 10M102 1230v120l-40 100M102 1350l35 22 30 35M42 1335l60 15M420 1270l50-15 55 5 50-50 30-75 110-60 60-40 60-20 65-45 80-15 20 15M755 1045l90-10 40-50M455 1350l15 80 22 90v48M42 975l70 10 90-20" />
        <Road $minor d="M500 1530q80-40 200-48l100 30 60 30 130 20" />
      </g>
      {/* Sjöbo – Ystad */}
      <g transform="translate(3030 700) scale(.33333 .3827)">
        <Water d="M42 268l55 22v35l-25 2-30-22zM232 283l65 17 50 20v60l18 15-35 20-50-40-40-5-10-15zM710 510l10-18 28-3-20 14zM455 690l20-17v30l32 18-45 35-8-20zM590 715l35-5 0 20-10 15 10 30-52-3 12-15zM582 850l10-24 30 20 35 5-10 25-30 10-25-12zM617 955l25-22 18 30-8 35-25-20zM525 78l30-2 28 12-20-4zM150 345l18-25-8 25z" />
        <Water d="M42 1385L100 1358 190 1347 270 1352 325 1345 350 1310 380 1270 410 1245 500 1243 540 1220 600 1210 690 1210 860 1210 990 1183V1568H42z" />
        <Hill d="M500 700l100-20 60 130-80 120-110-100zM310 200h60v60zM830 50l160 40v60l-120-40zM170 400l130-20 80 50-150 20zM60 620l60 20-60 100z" />
        <Water d="M455 690l20-17v30l32 18-45 35-8-20zM590 715l35-5 0 20-10 15 10 30-52-3 12-15zM582 850l10-24 30 20 35 5-10 25-30 10-25-12z" />
        <Urban d="M780 1160l80-10 50-50 20 40-80 60-90 10zM60 990l120 0-40 30z" />
        <Road d="M490 0v70l20 40 70 90 20 50-15 60v50l-50 90M42 190l140 55 110 55 35 0 30 20 80 50 60 60 50 30M245 503h70M410 505l70 5M530 550l80 5 100 35 40 50 160 80 55 45h30M555 560v35l50 60 25 70 20 70 50 60 30 80 30 45M768 1024l-8 80 20 60M42 993h100l120 22 170 35 140 30 180 95M990 920l-45 130-85 80-30 60-80 0-50 30" />
        <Road d="M42 1383L100 1356 190 1345 250 1352 310 1330 380 1268 410 1243 500 1243 540 1218 690 1216 720 1195M860 1208l130-25" />
        <Road $minor d="M95 540l-8 90 55 150 3 130-10 80M170 540l80 50 70 50 30 60 0 60 50 50 70 50-5 70 50 50 80 30 110 120M42 1240l80 8 110-25 200 5M190 1080l30 80 12 65M715 590l140-25 60-30 70-75M765 240v-30l90-45 130 48M600 320l100-3" />
      </g>
    </>
  );
}

function MapView() {
  return (
    <MapArea>
      <MapSvg viewBox="0 462 3360 1638">
        <Terrain />
        {shields.map(([t, x, y, w, h, c], i) => (
          <g key={i}>
            <rect x={x} y={y} width={w} height={h} fill={shieldColors[c][0]} />
            <ShieldText x={x + w / 2} y={y + h / 2 + 6.8} textAnchor="middle" $fill={shieldColors[c][1]} $bold={c !== "y"}>{t}</ShieldText>
          </g>
        ))}
        {places.map(([t, x, y, w]) => (
          <Place key={t + x} x={x} y={y} textLength={w}>{t}</Place>
        ))}
        <Place $big x={172} y={1979} textAnchor="end">Flensborg</Place>
        <Island x={977} y={1946} textLength={109}>Langeland</Island>
        <Strait transform="translate(263 1254) rotate(53)">Lillebælt</Strait>
        <Region transform="translate(862 1957) rotate(-15)">S</Region>
        <Region transform="translate(887 1946) rotate(-32)">Y</Region>
        <Region transform="translate(912 1934) rotate(-32)">D</Region>
      </MapSvg>
      <ZoomControl>
        <ZoomButton><svg width="22" height="22" viewBox="0 0 22 22"><path d="M11 0v22M0 11h22" stroke="#2a2a2a" strokeWidth="5.500" /></svg></ZoomButton>
        <ZoomButton><svg width="22" height="6" viewBox="0 0 22 6"><path d="M0 3h22" stroke="#2a2a2a" strokeWidth="5.500" /></svg></ZoomButton>
      </ZoomControl>
      <PanControl>
        <svg width="80" height="80" viewBox="0 0 80 80" fill="none" stroke="#222" strokeWidth="5.200"><path d="M33.500 26.500l6.500-6.500 6.500 6.500M33.500 53.500l6.500 6.500 6.500-6.500M26.500 33.500l-6.500 6.500 6.500 6.500M53.500 33.500l6.500 6.500-6.500 6.500" /></svg>
      </PanControl>
      <AddButton $w={360}>Tilføj Genbrugsbutik</AddButton>
      <Attribution>
        <Credit>Kortdata ©2025 GeoBasis-DE/BKG (©2009), Google</Credit>
        <Terms>Vilkår</Terms>
        <ScaleLabel>10 km</ScaleLabel>
        <ScaleBar />
      </Attribution>
      <Shortcuts>Tastaturgenveje</Shortcuts>
    </MapArea>
  );
}

export default function App() {
  return (
    <Window>
      <Global />
      <BrowserChrome />
      <Page>
        <SiteHeader>
          <SiteTitle>Vinyloppen</SiteTitle>
          <Button $w={145}>Om</Button>
        </SiteHeader>
        <MapBar>
          <svg width="41" height="35" viewBox="0 0 41 35"><path d="M3 0h10v35H3a3 3 0 0 1-3-3V3a3 3 0 0 1 3-3z" fill="#525252" /><path d="M15 2h21.500a2.500 2.500 0 0 1 2.500 2.500v26a2.500 2.500 0 0 1-2.500 2.500H15" fill="none" stroke="#525252" strokeWidth="3.600" /><path d="M0 15.500h4.500V10l6.500 7.500-6.500 7.500v-5.500H0z" fill="#0f0f0f" /></svg>
          <MapTitle>
            <MapName>Whereisvinyl</MapName>
            <MapNote>
              <svg width="24" height="24" viewBox="0 0 24 24"><circle cx="12" cy="12" r="12" fill="#1f3061" /><path d="M12 5v3.500M9 11h3.500v7M8.500 18h7.500" stroke="#5d6168" strokeWidth="2.800" fill="none" /></svg>
              Dette kort blev oprettet
            </MapNote>
          </MapTitle>
          <BarIcons>
            <svg width="32" height="32" viewBox="0 0 32 32" fill="#525252"><path d="M26 5.500L6 16l20 10.500" fill="none" stroke="#525252" strokeWidth="3" /><circle cx="26" cy="5.500" r="5.500" /><circle cx="5.500" cy="16" r="5.500" /><circle cx="26" cy="26.500" r="5.500" /></svg>
            <svg width="39" height="31" viewBox="0 0 39 31" fill="none" stroke="#525252" strokeWidth="4"><path d="M2 10V2h9M28 2h9v8M2 21v8h9M28 29h9v-8" /></svg>
          </BarIcons>
        </MapBar>
        <MapView />
        <Overlay>
          <Dialog>
            <DialogTitle>Udfyld Formular</DialogTitle>
            <FieldLabel>Navn På Stedet:</FieldLabel>
            <Field $focused>
              <Tooltip>
                <svg width="222" height="80" viewBox="0 0 222 80">
                  <path d="M20 .5H202a19.500 19.500 0 0 1 19.500 19.500V34A19.500 19.500 0 0 1 202 53.500H139q-5 0-9 5L114 76q-4.500 4.500-9 0L89 58.500q-4-5-9-5H20A19.500 19.500 0 0 1 .5 34V20A19.500 19.500 0 0 1 20 .5z" fill="#646260" stroke="#2b2b2b" strokeWidth="1.500" />
                  <path d="M20 2.500H202a17.500 17.500 0 0 1 17.500 17.500V34A17.500 17.500 0 0 1 202 51.500M20 51.500A17.500 17.500 0 0 1 2.500 34V20A17.500 17.500 0 0 1 20 2.500" fill="none" stroke="#868482" strokeWidth="1.500" />
                </svg>
                <TooltipText>Fill out this field</TooltipText>
              </Tooltip>
            </Field>
            <FieldLabel>Navn På Addrese:</FieldLabel>
            <Field />
            <Submit type="button">Tilføj Genbrugsbutik</Submit>
          </Dialog>
        </Overlay>
      </Page>
    </Window>
  );
}
